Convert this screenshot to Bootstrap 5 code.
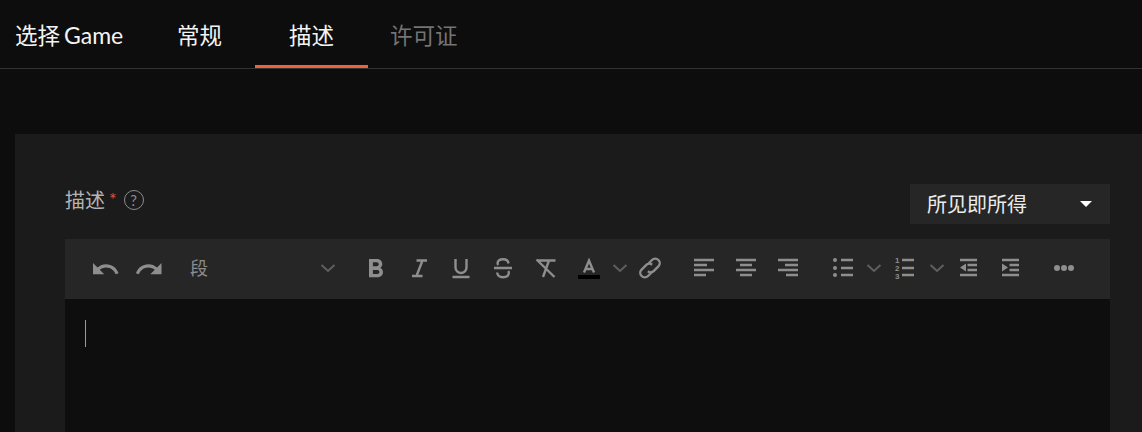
<!DOCTYPE html>
<html lang="zh">
  <head>
    <meta charset="UTF-8" />
    <meta name="viewport" content="width=device-width, initial-scale=1.0" />
    <title>描述</title>
    <link href="https://cdn.jsdelivr.net/npm/bootstrap@5.3.0/dist/css/bootstrap.min.css" rel="stylesheet" />
    <style>
      html, body { height: 432px; overflow: hidden; }
      body { background: #0d0d0d; font-family: "Lato", "Noto Sans CJK SC", sans-serif; }
      .step-tabs { height: 69px; border-bottom: 1px solid #333; }
      .step-tabs .nav-link { height: 68px; line-height: 71px; padding: 0 34px; font-size: 22.5px; color: #f4f4f4; border-bottom: 3px solid transparent; margin-bottom: -1px; }
      .step-tabs .nav-link:hover { color: #f4f4f4; }
      .step-tabs .nav-item:first-child .nav-link { width: 143px; padding: 0 0 0 15px; white-space: nowrap; }
      .step-tabs .nav-item:nth-child(2) .nav-link { padding-right: 33px; }
      .step-tabs .nav-item:last-child .nav-link { padding-left: 22px; color: #747474; }
      .step-tabs .nav-link.active { border-bottom-color: #e8643a; color: #f4f4f4; }
      .game-word { margin-left: 4px; font-size: 23px; }
      .desc-panel { margin: 65px 0 0 15px; padding: 50px 32px 0 50px; background: #1b1b1b; height: 298px; }
      .desc-label { font-size: 20px; line-height: 32px; color: #b4b4b4; }
      .req-star { color: #ee4a35; font-size: 18px; margin-left: 4px; margin-right: 7px; position: relative; top: -1px; }
      .help-dot { width: 20px; height: 20px; border: 1px solid #8c8c8c; color: #8c8c8c; font-size: 15px; }
      .mode-btn { width: 200px; height: 40px; padding: 0 18px 0 17px; background: #262626; color: #ececec; font-size: 20px; border: 0; border-radius: 0; }
      .mode-btn:hover, .mode-btn:focus { background: #262626; color: #ececec; }
      .mode-btn.dropdown-toggle::after { margin: 0; border-top: 6px solid #fff; border-left: 6px solid transparent; border-right: 6px solid transparent; border-bottom: 0; }
      .editor-bar { height: 60px; margin-top: 15px; padding: 0 0 2px 18px; background: #262626; }
      .tb-btn { width: 42.4px; flex: none; }
      .tb-wide { width: 44px; }
      .tb-caret { width: 20px; flex: none; }
      .tb-narrow { width: 18px; }
      .tb-sep { margin-left: 11px; }
      .tb-sep-lg { margin-left: 12.5px; }
      .tb-format { width: 184px; padding: 0 19px 0 19px; color: #8c8c8c; font-size: 18px; flex: none; }
      .tb-format span { margin-top: 1px; }
      .tb-ico { display: block; margin: 0 auto; fill: none; stroke: #8e8e8e; stroke-width: 2.4; }
      .tb-fill { fill: #8e8e8e; stroke: none; }
      .tb-chev { stroke: #5f5f5f; stroke-width: 2; }
      .tb-num { fill: #8e8e8e; stroke: none; font-size: 8px; font-weight: 700; font-family: "Liberation Sans", sans-serif; }
      .editor-body { height: 133px; padding: 21px 20px; background: #0e0e0e; }
      .caret-line { width: 1px; height: 27px; background: #9a9a9a; }
    </style>
  </head>
  <body>
    <ul class="nav step-tabs">
      <li class="nav-item"><a class="nav-link" href="#">选择<span class="game-word">Game</span></a></li>
      <li class="nav-item"><a class="nav-link" href="#">常规</a></li>
      <li class="nav-item"><a class="nav-link active" href="#">描述</a></li>
      <li class="nav-item"><a class="nav-link" href="#">许可证</a></li>
    </ul>

    <div class="desc-panel">
      <div class="d-flex justify-content-between align-items-start">
        <div class="desc-label d-flex align-items-center">
          描述<span class="req-star">*</span>
          <span class="help-dot rounded-circle d-inline-flex align-items-center justify-content-center">?</span>
        </div>
        <button class="btn mode-btn dropdown-toggle d-flex justify-content-between align-items-center" type="button">所见即所得</button>
      </div>

      <div class="editor-bar d-flex align-items-center">
        <div class="tb-btn tb-wide">
          <svg class="tb-ico" width="30" height="30"><path class="tb-fill" transform="translate(.5 1.25) scale(1.25)" d="M12.5 8c-2.65 0-5.05.99-6.9 2.6L2 7v9h9l-3.62-3.62c1.39-1.16 3.16-1.88 5.12-1.88 3.54 0 6.55 2.31 7.6 5.5l2.37-.78C21.08 11.03 17.15 8 12.5 8z"/></svg>
        </div>
        <div class="tb-btn tb-wide">
          <svg class="tb-ico" width="30" height="30"><path class="tb-fill" transform="translate(30 1.25) scale(-1.25 1.25)" d="M12.5 8c-2.65 0-5.05.99-6.9 2.6L2 7v9h9l-3.62-3.62c1.39-1.16 3.16-1.88 5.12-1.88 3.54 0 6.55 2.31 7.6 5.5l2.37-.78C21.08 11.03 17.15 8 12.5 8z"/></svg>
        </div>
        <div class="tb-format d-flex justify-content-between align-items-center">
          <span>段</span>
          <svg class="tb-ico tb-chev me-0" width="16" height="10"><path d="M1.5 2l6.5 6 6.5-6"/></svg>
        </div>

        <div class="tb-btn">
          <svg class="tb-ico" width="30" height="30"><path class="tb-fill" fill-rule="evenodd" transform="translate(-1.1 .8) scale(1.3)" d="M15.6 10.79c.97-.67 1.65-1.77 1.65-2.79 0-2.26-1.75-4-4-4H7v14h7.04c2.09 0 3.71-1.7 3.71-3.79 0-1.52-.86-2.82-2.15-3.42zM10 6.5h3c.83 0 1.5.67 1.5 1.5s-.67 1.5-1.5 1.5h-3v-3zm3.5 9H10v-3h3.5c.83 0 1.5.67 1.5 1.5s-.67 1.5-1.5 1.5z"/></svg>
        </div>
        <div class="tb-btn">
          <svg class="tb-ico" width="30" height="30"><path d="M12.5 7.5H23M8 23h10.5M18.5 7.5L12.5 23"/></svg>
        </div>
        <div class="tb-btn">
          <svg class="tb-ico" width="30" height="30"><path d="M9.5 6v8.5a5.5 5.5 0 0 0 11 0V6M6.5 24h17"/></svg>
        </div>
        <div class="tb-btn">
          <svg class="tb-ico" width="30" height="30"><path d="M6 15h18M20.5 10.5c-.3-2.8-2.5-4.3-5.5-4.3-3.2 0-5.4 1.5-5.4 3.9 0 .7.2 1.3.6 1.9M20.4 18c.3.6.4 1.1.4 1.7 0 2.9-2.5 4.5-5.8 4.5-3.1 0-5.6-1.6-5.8-4.7"/></svg>
        </div>
        <div class="tb-btn">
          <svg class="tb-ico" width="30" height="30"><path d="M6.5 7.5h18M18 7.5L12 24M5.5 6.5l18 17.5"/></svg>
        </div>
        <div class="tb-btn tb-wide">
          <svg class="tb-ico" width="30" height="30"><path d="M10 19.5l5-12 5 12M11.7 16h6.6"/><rect x="4" y="22" width="22" height="4" fill="#000" stroke="none"/></svg>
        </div>
        <div class="tb-caret tb-narrow">
          <svg class="tb-ico tb-chev" width="16" height="10"><path d="M1.5 2l6.5 6 6.5-6"/></svg>
        </div>
        <div class="tb-btn">
          <svg class="tb-ico" width="30" height="30"><path d="M13.5 10.5l3.5-3.5a4.5 4.5 0 0 1 6.4 6.4l-4.5 4.5a4.5 4.5 0 0 1-6 .4M16.5 19.5L13 23a4.5 4.5 0 0 1-6.4-6.4l4.5-4.5a4.5 4.5 0 0 1 6-.4"/></svg>
        </div>

        <div class="tb-btn tb-sep">
          <svg class="tb-ico" width="30" height="30"><path d="M5 7h20M5 12h13M5 17h20M5 22h12"/></svg>
        </div>
        <div class="tb-btn">
          <svg class="tb-ico" width="30" height="30"><path d="M5 7h20M9 12h12M5 17h20M9 22h12"/></svg>
        </div>
        <div class="tb-btn">
          <svg class="tb-ico" width="30" height="30"><path d="M5 7h20M12 12h13M5 17h20M13 22h12"/></svg>
        </div>

        <div class="tb-btn tb-sep-lg">
          <svg class="tb-ico" width="30" height="30"><path d="M13 7h12M13 15h12M13 22h12"/><circle class="tb-fill" cx="7" cy="7" r="2"/><circle class="tb-fill" cx="7" cy="15" r="2"/><circle class="tb-fill" cx="7" cy="22" r="2"/></svg>
        </div>
        <div class="tb-caret">
          <svg class="tb-ico tb-chev" width="16" height="10"><path d="M1.5 2l6.5 6 6.5-6"/></svg>
        </div>
        <div class="tb-btn">
          <svg class="tb-ico" width="30" height="30"><path d="M11 7h12M11 15h12M11 22h12"/><text class="tb-num" x="4" y="10">1</text><text class="tb-num" x="4" y="18">2</text><text class="tb-num" x="4" y="25.5">3</text></svg>
        </div>
        <div class="tb-caret">
          <svg class="tb-ico tb-chev" width="16" height="10"><path d="M1.5 2l6.5 6 6.5-6"/></svg>
        </div>
        <div class="tb-btn">
          <svg class="tb-ico" width="30" height="30"><path d="M7 7h17M14.5 12H24M14.5 17H24M7 22h17"/><path class="tb-fill" d="M13 10.5v8l-6-4z"/></svg>
        </div>
        <div class="tb-btn">
          <svg class="tb-ico" width="30" height="30"><path d="M7 7h17M14.5 12H24M14.5 17H24M7 22h17"/><path class="tb-fill" d="M7 10.5v8l6-4z"/></svg>
        </div>

        <div class="tb-btn tb-sep">
          <svg class="tb-ico" width="30" height="30"><circle class="tb-fill" cx="8" cy="15" r="3"/><circle class="tb-fill" cx="15" cy="15" r="3"/><circle class="tb-fill" cx="22" cy="15" r="3"/></svg>
        </div>
      </div>

      <div class="editor-body">
        <div class="caret-line"></div>
      </div>
    </div>

    <script src="https://cdn.jsdelivr.net/npm/bootstrap@5.3.0/dist/js/bootstrap.bundle.min.js"></script>
  </body>
</html>
